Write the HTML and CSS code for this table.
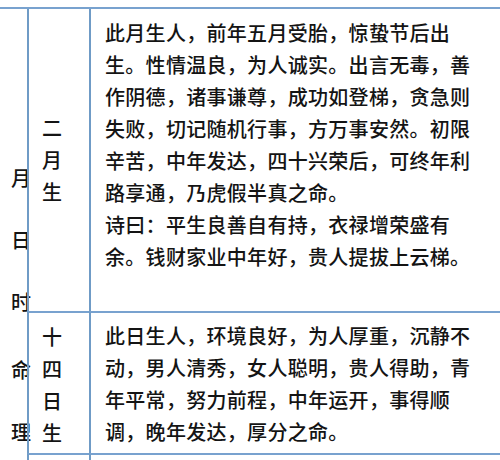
FILE: index.html
```html
<!DOCTYPE html>
<html lang="zh-CN">
<head>
<meta charset="utf-8">
<title>月日时命理</title>
<link rel="stylesheet" href="styles.css">
</head>
<body>
<div class="sheet">
  <div class="side">
    <span>月</span><span>日</span><span>时</span><span class="low">命</span><span>理</span>
  </div>
  <div class="label">
    <span>二</span><span>月</span><span>生</span>
  </div>
  <div class="text first">
    <p>此月生人，前年五月受胎，惊蛰节后出生。性情温良，为人诚实。出言无毒，善作阴德，诸事谦尊，成功如登梯，贪急则失败，切记随机行事，方万事安然。初限辛苦，中年发达，四十兴荣后，可终年利路享通，乃虎假半真之命。</p>
    <p>诗曰：平生良善自有持，衣禄增荣盛有余。钱财家业中年好，贵人提拔上云梯。</p>
  </div>
  <div class="label ruled second-label">
    <span>十</span><span>四</span><span>日</span><span>生</span>
  </div>
  <div class="text ruled centered">
    <p>此日生人，环境良好，为人厚重，沉静不动，男人清秀，女人聪明，贵人得助，青年平常，努力前程，中年运开，事得顺调，晚年发达，厚分之命。</p>
  </div>
  <div class="label ruled"></div>
  <div class="text ruled"></div>
</div>
</body>
</html>
```
FILE: styles.css
```css
html, body {
  margin: 0;
  padding: 0;
}

body {
  width: 500px;
  height: 460px;
  overflow: hidden;
  background: #ffffff;
  color: #141414;
  font-family: "Noto Sans CJK SC", "Microsoft YaHei", sans-serif;
  font-weight: 500;
}

.sheet {
  margin-top: 7px;
  display: grid;
  grid-template-columns: 27px 62px 1fr;
  grid-template-rows: 302px 142px 20px;
  border-top: 2px solid #78a2cf;
  font-size: 20px;
}

.side {
  grid-row: 1 / 4;
  display: flex;
  flex-direction: column;
  padding: 138px 0 0 11px;
  line-height: 62px;
  white-space: nowrap;
}

.side .low {
  margin-top: 6px;
}

.label {
  border-left: 2px solid #6f9bc6;
  display: flex;
  flex-direction: column;
  justify-content: center;
  padding-left: 13px;
  line-height: 32px;
}

.second-label {
  padding-top: 3px;
}

.text {
  border-left: 2px solid #6f9bc6;
  padding: 8px 23px 0 14px;
  line-height: 32px;
  letter-spacing: 0.3px;
}

.text p {
  margin: 0;
}

.ruled {
  border-top: 2px solid #78a2cf;
}

.centered {
  display: flex;
  flex-direction: column;
  justify-content: center;
  padding-top: 1px;
}
```
